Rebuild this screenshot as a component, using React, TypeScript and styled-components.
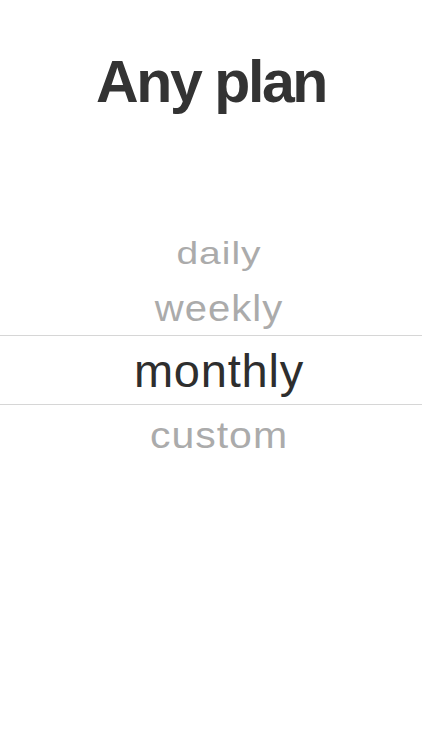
import React from "react";
import styled, { createGlobalStyle } from "styled-components";

const Global = createGlobalStyle`
  html, body { margin: 0; padding: 0; background: #ffffff; }
  body { font-family: "Liberation Sans", Arial, sans-serif; }
`;

const Page = styled.div`
  width: 422px;
  height: 750px;
  background: #ffffff;
  display: flex;
  flex-direction: column;
  align-items: stretch;
`;

const Title = styled.h1`
  margin: 0;
  padding-top: 42px;
  height: 80px;
  text-align: center;
  font-family: "Liberation Sans", Arial, sans-serif;
  font-weight: 700;
  font-size: 59px;
  letter-spacing: -2.4px;
  color: #333333;
  line-height: 80px;
`;

const Picker = styled.div`
  margin-top: 104px;
  display: flex;
  flex-direction: column;
`;

const Row = styled.div<{ $h: number; $selected?: boolean }>`
  height: ${(p) => p.$h}px;
  display: flex;
  align-items: center;
  justify-content: center;
  padding-left: 16px;
  box-sizing: border-box;
  border-top: ${(p) => (p.$selected ? "1.5px solid #d6d6d6" : "none")};
  border-bottom: ${(p) => (p.$selected ? "1.5px solid #d6d6d6" : "none")};
`;

const Label = styled.span<{ $size: number; $sy: number; $ls: number; $selected?: boolean }>`
  display: inline-block;
  font-family: "Liberation Sans", Arial, sans-serif;
  font-size: ${(p) => p.$size}px;
  line-height: 1;
  color: ${(p) => (p.$selected ? "#2e2e2e" : "#ababab")};
  transform: scaleY(${(p) => p.$sy});
  letter-spacing: ${(p) => p.$ls}px;
`;

const items = [
  { label: "daily", h: 54, size: 39, sy: 0.8, ls: 1 },
  { label: "weekly", h: 55, size: 40, sy: 0.92, ls: 1 },
  { label: "monthly", h: 70, size: 47, sy: 1, ls: 0.8, selected: true },
  { label: "custom", h: 60, size: 41, sy: 0.92, ls: 1 },
];

export default function App() {
  return (
    <Page>
      <Global />
      <Title>Any plan</Title>
      <Picker>
        {items.map((it) => (
          <Row key={it.label} $h={it.h} $selected={it.selected}>
            <Label $size={it.size} $sy={it.sy} $ls={it.ls} $selected={it.selected}>
              {it.label}
            </Label>
          </Row>
        ))}
      </Picker>
    </Page>
  );
}
